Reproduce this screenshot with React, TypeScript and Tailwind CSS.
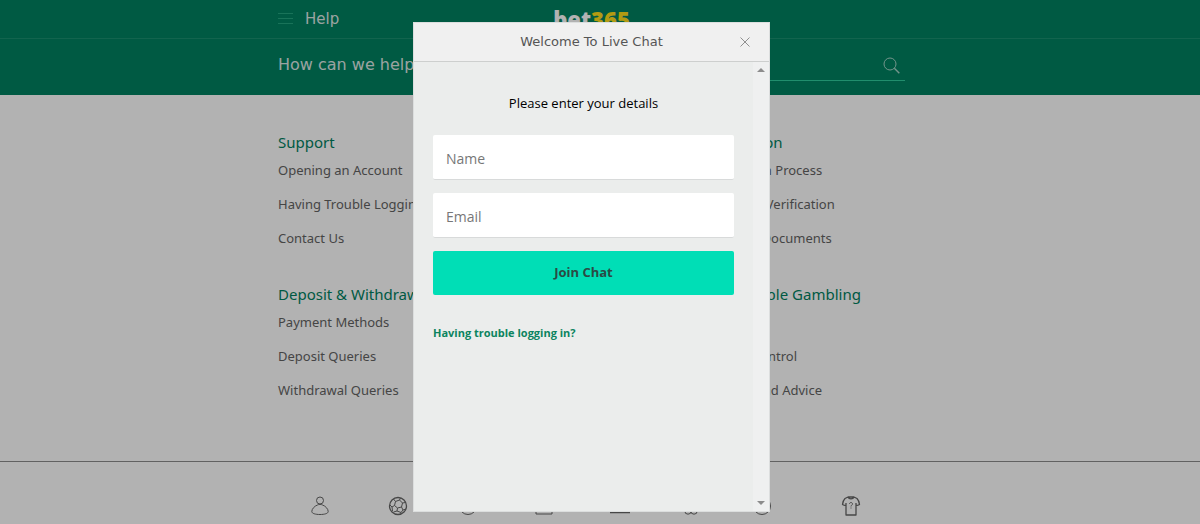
import React from "react";

type LinkGroupProps = {
  title: string;
  links: string[];
};

const leftGroups = [
  {
    title: "Support",
    links: ["Opening an Account", "Having Trouble Logging In?", "Contact Us"],
  },
  {
    title: "Deposit & Withdrawals",
    links: ["Payment Methods", "Deposit Queries", "Withdrawal Queries"],
  },
];

const rightGroups = [
  {
    title: "Verification",
    links: ["Verification Process", "Electronic Verification", "Required Documents"],
  },
  {
    title: "Responsible Gambling",
    links: ["Time-Out", "Keep in Control", "Support and Advice"],
  },
];

const LinkGroup: React.FC<LinkGroupProps> = ({ title, links }) => (
  <section className="font-['Noto_Sans',sans-serif]">
    <h2 className="h-5 text-[15px] leading-[18px] text-[#008161]">{title}</h2>
    <ul>
      {links.map((link) => (
        <li key={link} className="h-[34px] text-[13px] leading-[34px]">
          <a href="#" className="whitespace-nowrap text-[#646464]">
            {link}
          </a>
        </li>
      ))}
    </ul>
  </section>
);

const FooterIcon: React.FC<{ label: string; children: React.ReactNode }> = ({
  label,
  children,
}) => (
  <a href="#" aria-label={label} className="flex justify-center">
    <svg
      viewBox="0 0 20 20"
      className="h-5 w-5"
      fill="none"
      stroke="#666"
      strokeWidth="1"
      strokeLinejoin="round"
    >
      {children}
    </svg>
  </a>
);

const Header: React.FC = () => (
  <header className="bg-[#008161] text-[#dfe9e6]">
    <div className="border-b border-[#1a9070] pr-[17px]">
      <div className="mx-auto grid h-[38px] max-w-[627px] grid-cols-3 items-center">
        <div className="flex items-center gap-3">
          <button type="button" aria-label="Menu">
            <svg viewBox="0 0 15 12" className="h-3 w-[15px]" stroke="#25a580">
              <path d="M0 .5h15M0 5.5h15M0 10.5h15" />
            </svg>
          </button>
          <span className="text-[15px] leading-5">Help</span>
        </div>
        <a
          href="#"
          className="text-center font-['Open_Sans',sans-serif] text-[22px] leading-6 font-extrabold text-white"
        >
          bet<span className="text-[#ffdf1b]">365</span>
        </a>
      </div>
    </div>
    <div className="pr-[17px]">
      <div className="mx-auto flex h-14 max-w-[627px] items-start gap-3 pt-3">
        <label htmlFor="search" className="text-base leading-7">
          How can we help you?
        </label>
        <div className="flex h-[30px] flex-1 items-center border-b border-[#30cc9c] pr-[5px]">
          <input id="search" type="text" className="min-w-0 flex-1 outline-none" />
          <button type="button" aria-label="Search">
            <svg viewBox="0 0 17 17" className="h-[17px] w-[17px]" fill="none" stroke="#a6d5c7">
              <circle cx="7" cy="7" r="6" />
              <path d="M11.3 11.3l5 5" strokeWidth="1.4" />
            </svg>
          </button>
        </div>
      </div>
    </div>
  </header>
);

const Footer: React.FC = () => (
  <footer className="border-t border-[#8c8c8c] pt-[34px] pr-[17px] pb-2">
    <div className="mx-auto grid max-w-[627px] grid-cols-[84fr_72fr_68fr_84fr_70fr_72fr_70fr_108fr]">
      <FooterIcon label="Account">
        <circle cx="10" cy="4.5" r="3.5" />
        <path d="M7.500 9C4.500 10 1.800 13 1.800 15.500c0 2 3.700 3 8.200 3s8.200-1 8.200-3c0-2.500-2.700-5.500-5.700-6.500-1.500-.8-3.500-.8-5 0z" />
      </FooterIcon>
      <FooterIcon label="Sports">
        <circle cx="10" cy="10" r="8.500" strokeWidth="1.300" />
        <path d="M7.500 5.500l4-1.500 3 3-1 4-4 1-3-2.500zM7.500 5.500L5.500 3M11.500 4l1-2M14.500 7l3-.5M13.500 11l1.500 3 3-1M9.500 12l-.5 3 4 1.500 2-2.500M9 15l-3.500 1M13 16.500V18M6.500 9.500L4 11l-2-2M4 11l.5 4" />
      </FooterIcon>
      <FooterIcon label="In-Play">
        <circle cx="10" cy="10" r="8.500" />
        <path d="M10 4v6l4 2" />
      </FooterIcon>
      <FooterIcon label="Casino">
        <path d="M2 2h16v16H2z" />
        <circle cx="10" cy="10" r="3" />
      </FooterIcon>
      <FooterIcon label="Games">
        <path d="M0 4h20v12.500H0z" strokeWidth="1.500" />
      </FooterIcon>
      <FooterIcon label="Bingo">
        <circle cx="7" cy="15" r="3.200" />
        <circle cx="13" cy="15" r="3.200" />
        <path d="M7 12l4-10 2 10" />
      </FooterIcon>
      <FooterIcon label="Poker">
        <circle cx="10" cy="10" r="8.500" />
        <circle cx="10" cy="10" r="5" />
      </FooterIcon>
      <FooterIcon label="Extra">
        <path
          d="M7 1L4 2.500C2.500 4 1.800 6 1.500 8.500c1 .8 2 1 3.500 1V19h10V9.500c1.500 0 2.500-.2 3.500-1C18.200 6 17.500 4 16 2.500L13 1c-1 2.500-5 2.500-6 0zM5 9.500V7M15 9.500V7M7 1h6"
          strokeWidth="1.300"
        />
        <path d="M8.500 8c0-2 3-2 3 0 0 1.200-1.500 1-1.500 2.500M10 11.500v1" />
      </FooterIcon>
    </div>
  </footer>
);

const LiveChatDialog: React.FC = () => (
  <div className="fixed inset-0 flex items-start justify-center bg-black/30 pt-[22px] pr-[17px]">
    <div
      role="dialog"
      aria-labelledby="chat-title"
      className="w-[357px] border border-[#dcdede] bg-[#ebedec]"
    >
      <div className="grid h-[39px] grid-cols-[1fr_auto_1fr] items-center border-b border-[#cdcfce] bg-[#f0f0f0] pr-[19px]">
        <h1 id="chat-title" className="col-start-2 pl-[19px] text-[13px] leading-5 text-[#555]">
          Welcome To Live Chat
        </h1>
        <button type="button" aria-label="Close" className="justify-self-end">
          <svg viewBox="0 0 10 10" className="h-[10px] w-[10px]" stroke="#8f8f8f">
            <path d="M.5.5l9 9M9.500.5l-9 9" />
          </svg>
        </button>
      </div>
      <div className="flex h-[449px] font-['Open_Sans',sans-serif]">
        <form className="flex flex-1 flex-col px-[19px] pt-[31px]">
          <p className="text-center text-[13px] leading-5 text-black">
            Please enter your details
          </p>
          <div className="mt-[22px] flex flex-col gap-[13px]">
            <input
              type="text"
              aria-label="Name"
              placeholder="Name"
              className="h-[45px] rounded-xs border-b border-[#d8dada] bg-white px-[13px] pt-[3px] text-sm outline-none placeholder:text-[#777]"
            />
            <input
              type="email"
              aria-label="Email"
              placeholder="Email"
              className="h-[45px] rounded-xs border-b border-[#d8dada] bg-white px-[13px] pt-[3px] text-sm outline-none placeholder:text-[#777]"
            />
            <button
              type="submit"
              className="h-11 rounded-xs bg-[#00deb6] text-[13px] font-bold text-[#2b4a45]"
            >
              Join Chat
            </button>
          </div>
          <a href="#" className="mt-7 self-start text-[11px] leading-5 font-bold text-[#0c8460]">
            Having trouble logging in?
          </a>
        </form>
        <div className="flex w-4 flex-col items-center justify-between bg-[#eff0f0] py-[6px]">
          <svg viewBox="0 0 8 4" className="h-1 w-2" fill="#8c8c8c">
            <path d="M0 4l4-4 4 4z" />
          </svg>
          <svg viewBox="0 0 8 4" className="h-1 w-2" fill="#8c8c8c">
            <path d="M0 0l4 4 4-4z" />
          </svg>
        </div>
      </div>
    </div>
  </div>
);

const App: React.FC = () => (
  <div className="min-h-screen bg-white font-['DejaVu_Sans',Verdana,sans-serif]">
    <Header />
    <main className="pt-[38px] pr-[17px] pb-[54px]">
      <div className="mx-auto grid max-w-[627px] grid-cols-[425fr_202fr]">
        <div className="flex flex-col gap-[30px]">
          {leftGroups.map((group) => (
            <LinkGroup key={group.title} {...group} />
          ))}
        </div>
        <div className="flex flex-col gap-[30px]">
          {rightGroups.map((group) => (
            <LinkGroup key={group.title} {...group} />
          ))}
        </div>
      </div>
    </main>
    <Footer />
    <LiveChatDialog />
  </div>
);

export default App;
